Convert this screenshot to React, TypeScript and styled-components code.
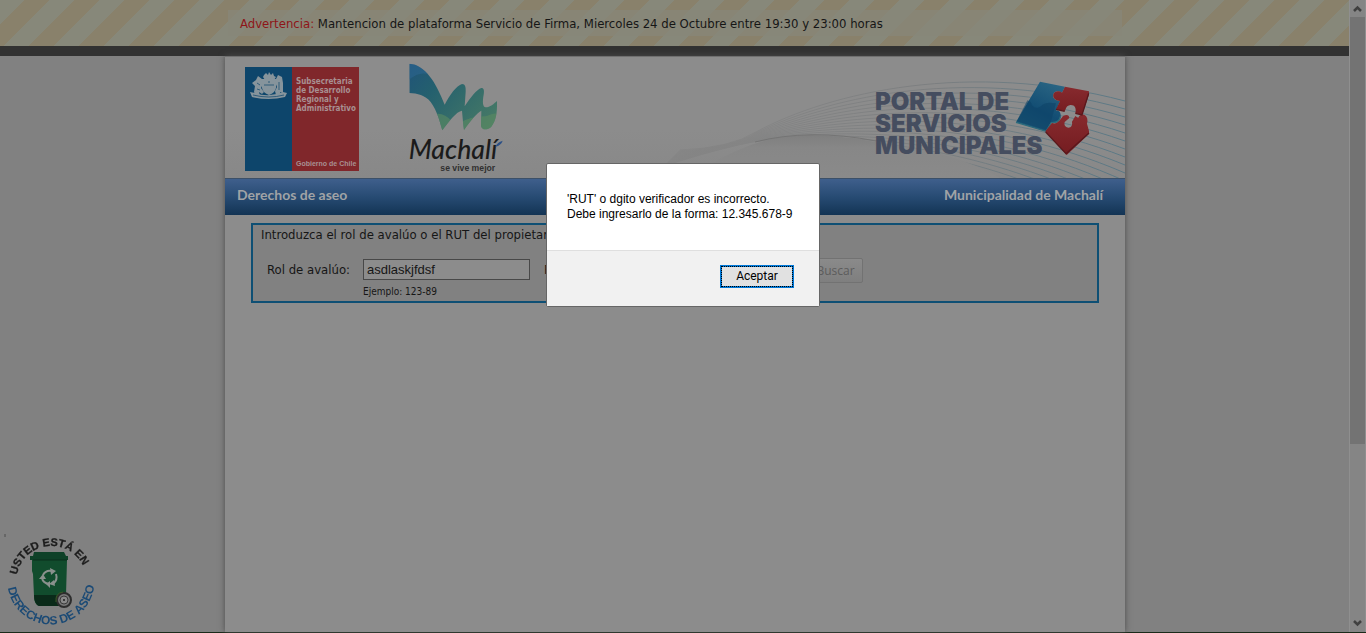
import React from "react";
import styled, { createGlobalStyle } from "styled-components";

const GlobalStyle = createGlobalStyle`
  *, *::before, *::after { box-sizing: border-box; }
  body {
    margin: 0;
    overflow: hidden;
    background: #818181;
    color: #161616;
    font: 13px/16px "DejaVu Sans Condensed", "Open Sans", sans-serif;
  }
`;

const Frame = styled.div`
  display: flex;
  height: 100vh;
  border-bottom: 1px solid #1a2a1a;
`;

const Page = styled.div`
  flex: 1;
  min-width: 0;
  display: flex;
  flex-direction: column;
`;

const WarningBar = styled.aside`
  padding: 10px 0;
  background-color: #87887a;
  background-image: linear-gradient(135deg, #87887a 25%, #89816b 25%, #89816b 50%, #87887a 50%, #87887a 75%, #89816b 75%);
  background-size: 50px 50px;
`;

const WarningText = styled.p`
  max-width: 894px;
  margin: 0 auto;
  padding: 6px 12px 4px;
  background: rgba(136, 135, 121, 0.7);
`;

const WarningLabel = styled.span`
  color: #8e1518;
`;

const DarkStrip = styled.div`
  height: 10px;
  flex: none;
  background: #323232;
`;

const Sheet = styled.div`
  flex: 1;
  width: 100%;
  max-width: 900px;
  margin: 0 auto;
  background: #8c8c8c;
  border-top: 1px solid #707070;
  box-shadow: 0 0 6px #4c4c4c;
`;

const Header = styled.header`
  display: flex;
  height: 121px;
  padding-left: 20px;
  background: linear-gradient(#8c8c8c 60%, #888888);
`;

const ChileLogo = styled.svg`
  flex: none;
  margin-top: 10px;
`;

const TownLogo = styled.svg`
  flex: none;
  margin-left: 41px;
`;

const PortalArt = styled.svg`
  flex: none;
  margin-left: auto;
`;

const TitleBar = styled.div`
  display: flex;
  justify-content: space-between;
  height: 37px;
  padding: 7px 22px 0 12px;
  border-top: 1px solid #3c5068;
  background: linear-gradient(#3f5f8c, #274b73 50%, #133454);
  color: #a0a3a6;
  font: bold 14px/18px Lato, sans-serif;
`;

const Title = styled.h1`
  margin: 0;
  font: inherit;
`;

const SearchForm = styled.form`
  margin: 8px 26px 0;
  padding: 2px 8px;
  height: 80px;
  border: 2px solid #0e4f74;
  background: #818181;
`;

const Hint = styled.p`
  margin: 0;
`;

const Fields = styled.div`
  display: flex;
  align-items: flex-start;
  margin-top: 15px;
  padding-left: 6px;
`;

const FieldLabel = styled.label<{ $width: number }>`
  width: ${(p) => p.$width}px;
  padding-top: 4px;
`;

const Field = styled.div`
  display: flex;
  flex-direction: column;
  width: 167px;
  padding-top: 1px;
  margin-right: 14px;
`;

const TextInput = styled.input`
  height: 21px;
  padding: 0 3px;
  border: 1px solid #484848;
  background: #8c8c8c;
  color: #161616;
  font: 13px "Liberation Sans", Arial, sans-serif;
`;

const Example = styled.small`
  margin-top: 5px;
  font-size: 10px;
  line-height: 14px;
`;

const SearchButton = styled.button`
  width: 55px;
  height: 25px;
  padding: 0;
  margin-left: 40px;
  border: 1px solid #727272;
  border-radius: 2px;
  background: linear-gradient(#8a8a8a, #7f7f7f);
  color: #5c5c5c;
  font: 12px "Open Sans", sans-serif;
`;

const Scrollbar = styled.div`
  flex: none;
  display: flex;
  flex-direction: column;
  width: 16px;
  border-right: 1px solid #8f8f8f;
  background: #858585;
  box-shadow: -1px 0 #8f8f8f;
`;

const Thumb = styled.div`
  flex: 5;
  background: #737373;
`;

const TrackRest = styled.div`
  flex: 2;
`;

const Badge = styled.svg`
  position: fixed;
  left: 0;
  bottom: 1px;
`;

const Overlay = styled.div`
  position: fixed;
  inset: 0;
  display: flex;
  justify-content: center;
  align-items: flex-start;
  padding-top: 163px;
`;

const Dialog = styled.section`
  width: 274px;
  border: 1px solid #666666;
  border-radius: 2px;
  background: #ffffff;
  color: #000000;
  font: 12px/15px "Liberation Sans", Arial, sans-serif;
`;

const Message = styled.p`
  margin: 0;
  padding: 28px 20px;
  white-space: nowrap;
`;

const DialogFooter = styled.footer`
  display: flex;
  justify-content: flex-end;
  padding: 14px 25px 18px;
  border-top: 1px solid #dfdfdf;
  background: #f1f1f1;
`;

const AcceptButton = styled.button`
  width: 74px;
  height: 23px;
  padding: 0;
  border: 2px solid #0078d7;
  outline: 1px dotted #000000;
  outline-offset: -2px;
  background: #e1e1e1;
  color: #000000;
  font: 12px/15px Roboto, sans-serif;
`;

const waveLines = Array.from({ length: 17 }, (_, i) => i);

function GovernmentLogo() {
  return (
    <ChileLogo width="114" height="104" viewBox="0 0 114 104" role="img" aria-label="Gobierno de Chile">
      <rect width="47" height="104" fill="#0d456b" />
      <rect x="47" width="67" height="104" fill="#80272b" />
      <g fill="#86949c">
        <path d="M19 8l2-2 2 2 1-3 2 3 2-2 1 3 2 1-2 3h-9l-2-3z" />
        <path d="M17 12h14v9q-1 5-7 7-6-2-7-7z" />
        <path d="M17 12l-4-3-2 4-4 3 3 3-1 6 2 4h4l-1-4 3 2 2-2-3-4 2-4z" />
        <path d="M31 12l2-4 4 2 1 6v10l-3-1v3h-4l-1-4 2-4-2-5z" />
        <path d="M5 25l5 1q14 5 28-1l4 1-2 4q-16 4-33 0z" />
      </g>
      <g stroke="#0d456b" fill="none">
        <path d="M19 18h10M24 14v2M12 16l3 2M34 15v8M12 22l3 1M8 28q16 4 31 0" strokeWidth=".7" />
      </g>
      <g fill="#a89092" fontFamily="DejaVu Sans Condensed, sans-serif" fontWeight="bold" fontSize="8">
        <text x="51" y="17">Subsecretaria</text>
        <text x="51" y="26">de Desarrollo</text>
        <text x="51" y="35">Regional y</text>
        <text x="51" y="44">Administrativo</text>
        <text x="51" y="99" fontSize="7" fontFamily="Liberation Sans, sans-serif">Gobierno de Chile</text>
      </g>
    </ChileLogo>
  );
}

function MunicipalityLogo() {
  return (
    <TownLogo width="110" height="120" viewBox="0 -3 330 360" role="img" aria-label="Machalí, se vive mejor">
      <defs>
        <linearGradient id="swoosh" x1="0" y1="0" x2="1" y2="0.6">
          <stop offset="0" stopColor="#1f4f7c" />
          <stop offset=".4" stopColor="#24606e" />
          <stop offset="1" stopColor="#477a66" />
        </linearGradient>
        <clipPath id="swooshClip">
          <path d="M28 17C75 20 108 72 134 140C148 112 170 82 186 78C196 78 198 88 197 102L194 145C212 118 230 94 244 90C252 90 253 98 251 110C247 132 248 146 257 148C270 148 282 137 291 129C292 165 288 188 274 206C262 217 246 217 243 204L244 158C232 164 212 187 192 216C189 196 188 178 186 158C170 160 146 190 127 217C119 190 112 160 92 132C75 111 52 106 28 105Z" />
        </clipPath>
      </defs>
      <g clipPath="url(#swooshClip)">
        <rect width="330" height="230" fill="url(#swoosh)" />
        <path d="M20 70Q55 40 82 48L66 10H20Z" fill="#2d6794" opacity=".5" />
        <path d="M100 170Q130 160 155 190L120 230ZM180 195Q225 165 300 180V230H180ZM235 190Q265 165 300 165V230H235Z" fill="#5c8b60" opacity=".6" />
      </g>
      <text x="26" y="303" fontSize="80" fontFamily="Lato, sans-serif" fontStyle="italic" fontWeight="500" fill="#1b1b1b">Machalí</text>
      <text x="121" y="338" fontSize="26" fontFamily="Liberation Sans, sans-serif" fontWeight="bold" fill="#303030">se vive mejor</text>
      <path d="M286 266Q292 252 308 248Q304 262 286 266Z" fill="#2b4f86" />
    </TownLogo>
  );
}

function PortalBanner() {
  return (
    <PortalArt width="485" height="121" viewBox="640 57 485 121" role="img" aria-label="Portal de servicios municipales">
      <defs>
        <linearGradient id="wave" gradientUnits="userSpaceOnUse" x1="740" y1="0" x2="1125" y2="0">
          <stop offset="0" stopColor="#848484" />
          <stop offset=".5" stopColor="#787b7d" />
          <stop offset="1" stopColor="#4e7484" />
        </linearGradient>
        <linearGradient id="hill" x1="0" y1="0" x2="0" y2="1">
          <stop offset="0" stopColor="#7f7f7f" />
          <stop offset=".3" stopColor="#878787" />
          <stop offset="1" stopColor="#8a8a8a" />
        </linearGradient>
        <linearGradient id="blueTile" x1=".8" y1="0" x2=".3" y2="1">
          <stop offset="0" stopColor="#2b6684" />
          <stop offset=".6" stopColor="#124d73" />
          <stop offset="1" stopColor="#205c7a" />
        </linearGradient>
        <linearGradient id="redTile" x1="0" y1="0" x2="0" y2="1">
          <stop offset="0" stopColor="#872a2e" />
          <stop offset="1" stopColor="#741c20" />
        </linearGradient>
      </defs>
      <g fill="none" stroke="url(#wave)">
        {waveLines.map((i) => (
          <path key={i} d={`M${680 - i} ${150 + i}Q${730 + i} ${148 - i / 2} ${756 + i} ${132 + i / 2}C${830 + i * 3} ${92 + i * 3} ${970 + i * 2} ${60 + i * 6} 1125 ${101 + i * 8}`} strokeWidth=".8" />
        ))}
      </g>
      <path d="M690 178Q750 134 812 135Q850 136 890 145Q955 152 1000 178Z" fill="url(#hill)" />
      <path d="M755 142Q810 128 876 141" fill="none" stroke="#747474" />
      <g fill="#454d5f" fontFamily="Inter, Liberation Sans, sans-serif" fontWeight="900" fontSize="24">
        <text x="875" y="110">PORTAL DE</text>
        <text x="875" y="132">SERVICIOS</text>
        <text x="875" y="154">MUNICIPALES</text>
      </g>
      <g transform="translate(680 50) scale(.33333)">
        <path d="M1080 95L1155 110L1146 128C1134 120 1121 124 1119 135C1118 149 1132 152 1140 153L1128 182C1139 178 1145 193 1141 205C1137 219 1120 221 1112 218L1098 244L1008 217Z" fill="url(#blueTile)" />
        <path d="M1042 151Q1054 154 1056 166Q1070 182 1086 166Q1095 155 1128 160L1112 218L1098 240L1010 214Z" fill="#0d4166" opacity=".55" />
        <path d="M1008 217L1098 244L1114 218Q1138 219 1141 200" fill="none" stroke="#2b6b7c" strokeWidth="4" />
        <path d="M1155 110L1227 124V134L1206 195L1186 190C1190 174 1184 164 1171 165C1157 167 1158 178 1154 184L1128 178L1140 153C1128 153 1117 145 1120 133C1125 121 1139 123 1146 128Z" fill="url(#redTile)" />
        <path d="M1096 244L1116 219Q1127 224 1138 212L1150 197Q1167 190 1168 204L1154 216Q1150 230 1165 233Q1179 232 1176 215L1186 198Q1192 203 1195 203Q1199 192 1213 194Q1226 201 1221 221L1227 243V252L1160 315Z" fill="url(#redTile)" />
        <path d="M1097 246L1158 311L1227 249M1128 178L1154 184M1186 190L1206 195L1226 130" fill="none" stroke="#59181c" strokeWidth="4" />
      </g>
    </PortalArt>
  );
}

function LocationBadge() {
  return (
    <Badge width="110" height="107" viewBox="0 525 110 107" role="img" aria-label="Usted está en derechos de aseo">
      <defs>
        <path id="upperArc" d="M17 575A35 35 0 0 1 86 575" />
        <path id="lowerArc" d="M8 588A43 43 0 0 0 94 574" />
      </defs>
      <path d="M5 534v3" stroke="#4d4d4d" />
      <g fontFamily="Liberation Sans, sans-serif" fontWeight="bold">
        <text fontSize="11" fill="#1d1d1d" stroke="#1d1d1d" strokeWidth=".3"><textPath href="#upperArc">USTED ESTÁ EN</textPath></text>
        <text fontSize="12" fill="#1b4a75"><textPath href="#lowerArc">DERECHOS DE ASEO</textPath></text>
      </g>
      <path d="M34 552h30l2 4h2v4H30v-4h3z" fill="#0e4128" />
      <path d="M32 560h35l-1 35q0 9-6 11H39q-5-2-5-10l-1-22-1-3z" fill="#114c2d" />
      <path d="M34 595h32q-1 9-6 11H39q-5-2-5-11z" fill="#0a2a19" />
      <path d="M33 560h34" stroke="#0a2e1c" />
      <g fill="none" stroke="#8a918d" strokeWidth="2">
        <path d="M43 575q3-5 8-4M56 574q2 6-3 10M49 584q-6-1-7-6" />
      </g>
      <path d="M50 568l6 3-5 4zM54 580l1 6-6-2zM39 579l4-5 3 5zM50 581v7l-4-4z" fill="#8a918d" />
      <circle cx="64" cy="600" r="7" fill="#777777" stroke="#2d2d2d" strokeWidth="2" />
      <circle cx="64" cy="600" r="4" fill="#888888" stroke="#3b3b3b" strokeWidth="1" />
      <circle cx="64" cy="600" r="1" fill="#222222" />
      <path d="M56 602q-1-9 7-10" fill="none" stroke="#3a5a26" />
    </Badge>
  );
}

export default function App() {
  return (
    <>
      <GlobalStyle />
      <Frame>
        <Page>
          <WarningBar>
            <WarningText>
              <WarningLabel>Advertencia:</WarningLabel> Mantencion de plataforma Servicio de Firma, Miercoles 24 de Octubre entre 19:30 y 23:00 horas
            </WarningText>
          </WarningBar>
          <DarkStrip />
          <Sheet>
            <Header>
              <GovernmentLogo />
              <MunicipalityLogo />
              <PortalBanner />
            </Header>
            <TitleBar>
              <Title>Derechos de aseo</Title>
              <span>Municipalidad de Machalí</span>
            </TitleBar>
            <SearchForm>
              <Hint>Introduzca el rol de avalúo o el RUT del propietario</Hint>
              <Fields>
                <FieldLabel htmlFor="rol" $width={96}>Rol de avalúo:</FieldLabel>
                <Field>
                  <TextInput id="rol" defaultValue="asdlaskjfdsf" />
                  <Example>Ejemplo: 123-89</Example>
                </Field>
                <FieldLabel htmlFor="rut" $width={43}>RUT:</FieldLabel>
                <Field>
                  <TextInput id="rut" />
                </Field>
                <SearchButton type="button">Buscar</SearchButton>
              </Fields>
            </SearchForm>
          </Sheet>
        </Page>
        <Scrollbar aria-hidden="true">
          <svg width="15" height="17" viewBox="0 0 15 17"><path d="M4 11l3.500-3.500L11 11" fill="none" stroke="#404040" strokeWidth="2.500" /></svg>
          <Thumb />
          <TrackRest />
          <svg width="15" height="17" viewBox="0 0 15 17"><path d="M4 6l3.500 3.500L11 6" fill="none" stroke="#404040" strokeWidth="2.500" /></svg>
        </Scrollbar>
      </Frame>
      <LocationBadge />
      <Overlay>
        <Dialog role="alertdialog" aria-modal="true" aria-describedby="message">
          <Message id="message">
            'RUT' o dgito verificador es incorrecto.
            <br />
            Debe ingresarlo de la forma: 12.345.678-9
          </Message>
          <DialogFooter>
            <AcceptButton type="button">Aceptar</AcceptButton>
          </DialogFooter>
        </Dialog>
      </Overlay>
    </>
  );
}
